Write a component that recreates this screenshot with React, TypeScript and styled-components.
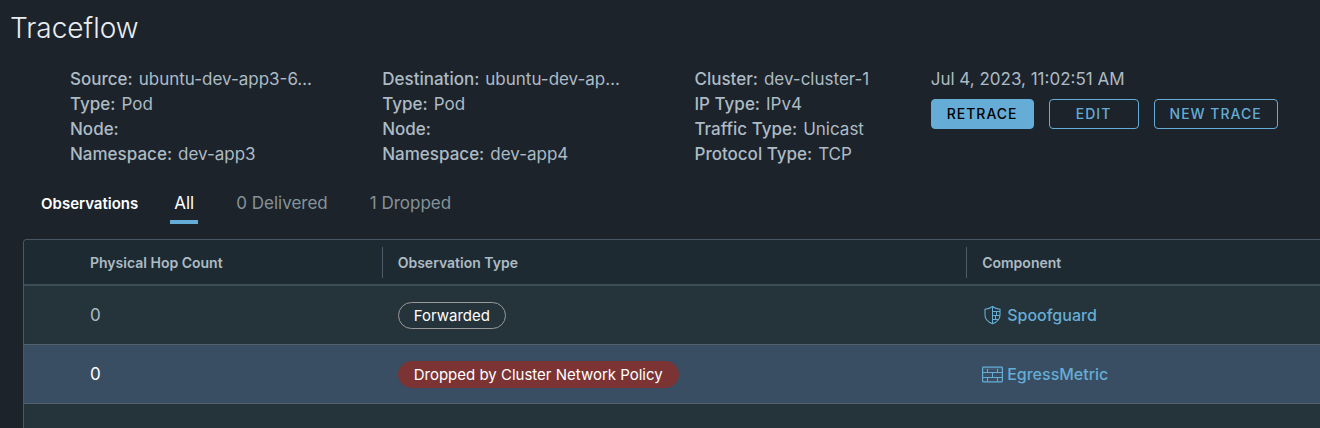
import React, { useState } from "react";
import styled, { createGlobalStyle, css } from "styled-components";

const GlobalStyle = createGlobalStyle`
  *, *::before, *::after { box-sizing: border-box; }
  body {
    margin: 0;
    background: #1c232b;
    color: #adbbc4;
    font-family: Inter, "Open Sans", sans-serif;
    font-size: 17px;
    line-height: 25px;
  }
`;

const Page = styled.main`
  display: flex;
  flex-direction: column;
  min-height: 100vh;
`;

const Title = styled.h1`
  margin: 0;
  padding: 10px 10px 0;
  font-size: 28px;
  line-height: 36px;
  font-weight: 300;
  color: #eaedf0;
`;

const Summary = styled.section`
  display: grid;
  grid-template-columns: 312fr 312fr 236fr 389fr;
  padding: 21px 0 0 70px;
`;

const Facts = styled.dl`
  margin: 0;
  min-width: 0;
`;

const Fact = styled.div`
  display: flex;
  gap: 6px;
  white-space: nowrap;
`;

const Label = styled.dt`
  font-weight: 500;
`;

const Value = styled.dd`
  margin: 0;
`;

const Actions = styled.div`
  display: flex;
  gap: 15px;
  padding-top: 7px;
`;

const Button = styled.button<{ $primary?: boolean }>`
  height: 30px;
  min-width: 90px;
  padding: 0 15px;
  border: 1px solid #65add6;
  border-radius: 4px;
  background: ${(p) => (p.$primary ? "#65add6" : "transparent")};
  color: ${(p) => (p.$primary ? "#000" : "#65add6")};
  font: 500 14px/28px Inter, sans-serif;
  letter-spacing: 1px;
  text-transform: uppercase;
  white-space: nowrap;
`;

const Filters = styled.div`
  display: flex;
  align-items: flex-start;
  padding: 23px 0 0 41px;
`;

const FiltersTitle = styled.h2`
  margin: 0 32px 0 0;
  font-size: 15px;
  line-height: 28px;
  font-weight: 600;
  color: #fff;
`;

const TabList = styled.div`
  display: flex;
  gap: 34px;
`;

const Tab = styled.button<{ $active: boolean }>`
  height: 34px;
  padding: 0 4px 3px;
  border: 0;
  border-bottom: 4px solid ${(p) => (p.$active ? "#65add6" : "transparent")};
  background: none;
  color: ${(p) => (p.$active ? "#fff" : "#859399")};
  font: 400 17px/25px Inter, sans-serif;
`;

const Grid = styled.div`
  flex: 1;
  margin: 15px 0 0 23px;
  border: 1px solid #495865;
  border-width: 1px 0 0 1px;
  border-top-left-radius: 4px;
  background: #25333a;
  overflow: hidden;
`;

const Table = styled.table`
  width: 100%;
  table-layout: fixed;
  border-collapse: separate;
  border-spacing: 0;
`;

const Col = styled.col<{ $share: number }>`
  width: ${(p) => p.$share}%;
`;

const cell = css`
  padding: 0 16px;
  text-align: left;
  vertical-align: middle;
  &:first-child { padding-left: 66px; }
`;

const HeadCell = styled.th`
  ${cell}
  height: 46px;
  padding: 0;
  border-bottom: 2px solid #3e4c58;
  background: #1e2a32;
  font-size: 14px;
  line-height: 31px;
  font-weight: 600;
`;

const HeadText = styled.div<{ $divided?: boolean }>`
  border-left: ${(p) => (p.$divided ? "1px solid #4d5c69" : "0")};
  padding-left: ${(p) => (p.$divided ? "15px" : "0")};
`;

const Row = styled.tr<{ $selected?: boolean }>`
  background: ${(p) => (p.$selected ? "#394e62" : "#25333a")};
  color: ${(p) => (p.$selected ? "#fff" : "#adbbc4")};
`;

const Cell = styled.td`
  ${cell}
  height: 59px;
  border-bottom: 1px solid #53616d;
`;

const Pill = styled.span<{ $tone: "plain" | "danger" }>`
  display: block;
  width: fit-content;
  padding: 0 15px;
  border: 1px solid ${(p) => (p.$tone === "danger" ? "#7b3334" : "#9a9a9a")};
  border-radius: 14px;
  background: ${(p) => (p.$tone === "danger" ? "#7b3334" : "transparent")};
  color: #fff;
  font-size: 15px;
  line-height: 25px;
`;

const ComponentLink = styled.a`
  display: flex;
  width: fit-content;
  align-items: center;
  gap: 4px;
  color: #65add6;
  font-size: 16px;
  font-weight: 500;
  text-decoration: none;
`;

const Icon = styled.svg`
  flex: none;
  fill: none;
  stroke: currentColor;
`;

const ShieldIcon = () => (
  <Icon width="21" height="20" viewBox="0 0 21 20" aria-hidden="true">
    <path d="M10.5 1.5C8.5 3 5.5 4 3 4.2V10c0 4.2 3 7 7.5 8.8C15 17 18 14.2 18 10V4.2C15.5 4 12.5 3 10.5 1.5Z" strokeWidth="1.1" />
    <path d="M10.5 1.5V18.8M10.5 6.500H18M10.5 10.5H18M10.5 14.5H16M14.5 6.5V10.5M13.5 10.5V14.5" />
  </Icon>
);

const WallIcon = () => (
  <Icon width="21" height="17" viewBox="0 0 21 17" aria-hidden="true">
    <rect x="0.6" y="1.1" width="19.8" height="14.8" rx="0.8" strokeWidth="1.2" />
    <path d="M1 6.5H20M1 11.5H20M5.5 3V6.500M15.500 3V6.5M10.5 6.5V11.5M5.5 11.5V15.5M15.5 11.5V15.5" />
    <path d="M1 3H20" strokeWidth="0.5" opacity="0.5" />
  </Icon>
);

const facts: [string, string][][] = [
  [["Source:", "ubuntu-dev-app3-6…"], ["Type:", "Pod"], ["Node:", ""], ["Namespace:", "dev-app3"]],
  [["Destination:", "ubuntu-dev-ap…"], ["Type:", "Pod"], ["Node:", ""], ["Namespace:", "dev-app4"]],
  [["Cluster:", "dev-cluster-1"], ["IP Type:", "IPv4"], ["Traffic Type:", "Unicast"], ["Protocol Type:", "TCP"]],
];

const tabs = ["All", "0 Delivered", "1 Dropped"];

export default function App() {
  const [active, setActive] = useState("All");
  return (
    <Page>
      <GlobalStyle />
      <Title>Traceflow</Title>
      <Summary>
        {facts.map((group, i) => (
          <Facts key={i}>
            {group.map(([label, value]) => (
              <Fact key={label}>
                <Label>{label}</Label>
                <Value>{value}</Value>
              </Fact>
            ))}
          </Facts>
        ))}
        <div>
          <time dateTime="2023-07-04T11:02:51">Jul 4, 2023, 11:02:51 AM</time>
          <Actions>
            <Button type="button" $primary>Retrace</Button>
            <Button type="button">Edit</Button>
            <Button type="button">New Trace</Button>
          </Actions>
        </div>
      </Summary>
      <Filters>
        <FiltersTitle>Observations</FiltersTitle>
        <TabList role="tablist">
          {tabs.map((tab) => (
            <Tab
              key={tab}
              type="button"
              role="tab"
              aria-selected={tab === active}
              $active={tab === active}
              onClick={() => setActive(tab)}
            >
              {tab}
            </Tab>
          ))}
        </TabList>
      </Filters>
      <Grid>
        <Table>
          <colgroup>
            <Col $share={27.6} />
            <Col $share={45.1} />
            <Col $share={27.3} />
          </colgroup>
          <thead>
            <tr>
              <HeadCell scope="col"><HeadText>Physical Hop Count</HeadText></HeadCell>
              <HeadCell scope="col"><HeadText $divided>Observation Type</HeadText></HeadCell>
              <HeadCell scope="col"><HeadText $divided>Component</HeadText></HeadCell>
            </tr>
          </thead>
          <tbody>
            <Row>
              <Cell>0</Cell>
              <Cell><Pill $tone="plain">Forwarded</Pill></Cell>
              <Cell><ComponentLink href="#spoofguard"><ShieldIcon />Spoofguard</ComponentLink></Cell>
            </Row>
            <Row $selected>
              <Cell>0</Cell>
              <Cell><Pill $tone="danger">Dropped by Cluster Network Policy</Pill></Cell>
              <Cell><ComponentLink href="#egressmetric"><WallIcon />EgressMetric</ComponentLink></Cell>
            </Row>
          </tbody>
        </Table>
      </Grid>
    </Page>
  );
}
